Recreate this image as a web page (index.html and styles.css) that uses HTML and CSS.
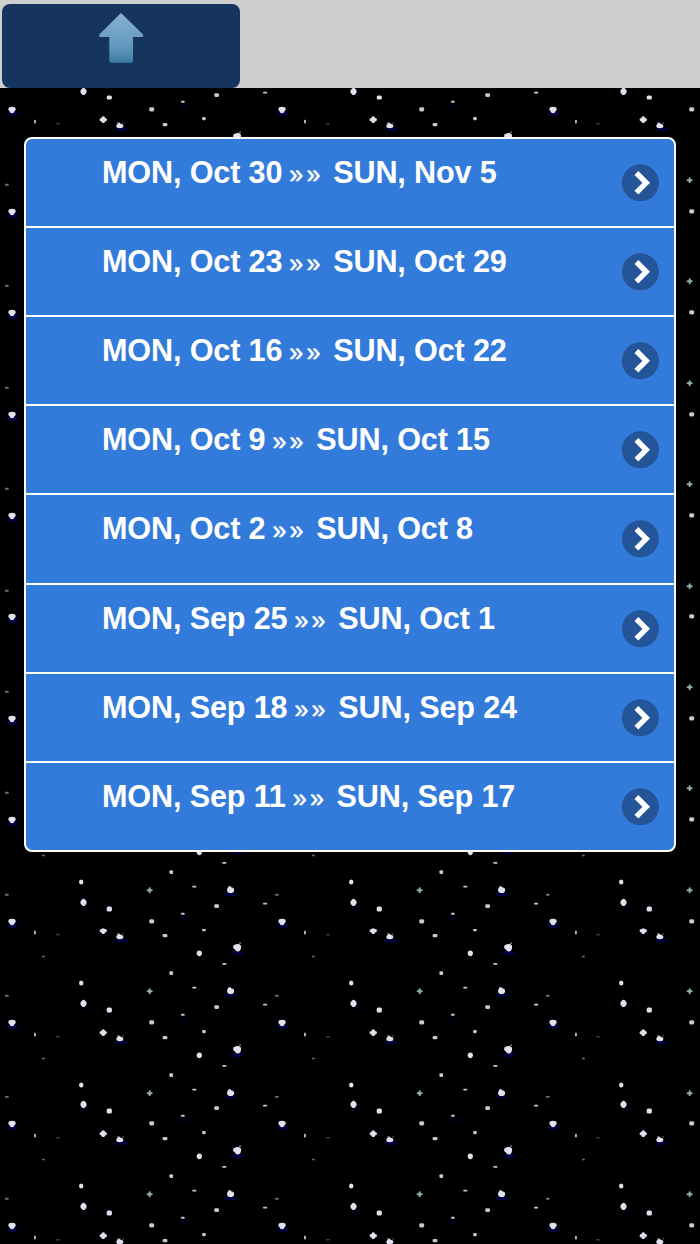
FILE: index.html
```
<!DOCTYPE html>
<html lang="en">
  <head>
    <meta charset="UTF-8" />
    <title>Weeks</title>
    <link rel="stylesheet" href="styles.css">
  </head>
  <body>
    <div class="header">
      <a class="up" href="#" aria-label="Up">
        <svg width="46" height="52" viewBox="0 0 46 52">
          <defs>
            <linearGradient id="arrow" x1="0" y1="0" x2="0" y2="1">
              <stop offset="0" stop-color="#86b0d1" />
              <stop offset="0.65" stop-color="#6499bf" />
              <stop offset="1" stop-color="#3f7ba6" />
            </linearGradient>
          </defs>
          <path d="M23.5 1.5 L45 22.5 Q45.8 25 44 25 H35 V49 Q35 50.8 33.5 50.8 H13 Q11.3 50.8 11.3 49 V25 H2.5 Q0.5 25 1.3 22.5 L22.5 1.5 Q23 1 23.5 1.5 Z" fill="url(#arrow)" />
        </svg>
      </a>
    </div>

    <ul class="weeks" id="weeks"></ul>

    <script>
      let weeks = [
        ["MON, Oct 30", "SUN, Nov 5"],
        ["MON, Oct 23", "SUN, Oct 29"],
        ["MON, Oct 16", "SUN, Oct 22"],
        ["MON, Oct 9", "SUN, Oct 15"],
        ["MON, Oct 2", "SUN, Oct 8"],
        ["MON, Sep 25", "SUN, Oct 1"],
        ["MON, Sep 18", "SUN, Sep 24"],
        ["MON, Sep 11", "SUN, Sep 17"]
      ];
      let list = document.getElementById("weeks");
      for (let week of weeks) {
        let li = document.createElement("li");
        li.innerHTML = `
          <a href="#">
            <span class="range">${week[0]}<span class="sep">»»</span>${week[1]}</span>
            <svg class="next" width="38" height="38" viewBox="0 0 38 38">
              <circle cx="19.4" cy="18.8" r="18.5" fill="#235598" />
              <path d="M15.4 9 L25.2 18.8 L15.4 28.6" fill="none" stroke="#fff" stroke-width="5.4" />
            </svg>
          </a>
        `;
        list.appendChild(li);
      }
    </script>
  </body>
</html>
```
FILE: styles.css
```
html {
  height: 100%;
}
body {
  margin: 0;
  min-height: 100%;
  background-color: #000;
  background-image: url("data:image/svg+xml,%3Csvg xmlns='http://www.w3.org/2000/svg' width='270.3' height='101.4' viewBox='0 0 270.3 101.4'%3E%3Cg fill='%23000050' opacity='.75'%3E%3Cellipse cx='12.500' cy='66' rx='5.500' ry='2.500'/%3E%3Cellipse cx='121' cy='82' rx='7' ry='1.800'/%3E%3Cellipse cx='231' cy='35' rx='7' ry='1.800'/%3E%3Cellipse cx='238' cy='94.500' rx='6' ry='2.500'/%3E%3Cellipse cx='183' cy='59' rx='4' ry='3' opacity='.3'/%3E%3Cellipse cx='86' cy='48' rx='4' ry='2' opacity='.3'/%3E%3C/g%3E%3Cg fill='%23e0e0ee'%3E%3Cellipse cx='12' cy='61.800' rx='3.600' ry='2.400'/%3E%3Cellipse cx='12' cy='62.800' rx='2.500' ry='3'/%3E%3Cellipse cx='83.300' cy='43.200' rx='3.100' ry='2.600'/%3E%3Cellipse cx='83.300' cy='43.200' rx='2.200' ry='3.600'/%3E%3Crect x='106.400' y='47.200' width='5.200' height='5' rx='1.500'/%3E%3Cellipse cx='103' cy='72.200' rx='3.700' ry='1.900'/%3E%3Cellipse cx='103' cy='72.200' rx='2' ry='3.400'/%3E%3Cellipse cx='119.500' cy='78.600' rx='3.500' ry='2.200'/%3E%3Cellipse cx='118.700' cy='77.700' rx='1.900' ry='2.600'/%3E%3Cellipse cx='231' cy='31' rx='3.500' ry='2.800'/%3E%3Cellipse cx='230' cy='29.500' rx='1.900' ry='2.600'/%3E%3Cellipse cx='237.500' cy='88.400' rx='4' ry='2.600'/%3E%3Cellipse cx='238.200' cy='89.200' rx='3' ry='3.700'/%3E%3Cellipse cx='199.800' cy='94.800' rx='2.600' ry='2.800'/%3E%3Cellipse cx='81' cy='22.800' rx='2.200' ry='2.500'/%3E%3C/g%3E%3Cg fill='%23c8c8d0'%3E%3Crect x='148.800' y='60' width='5' height='4' rx='1.500'/%3E%3Crect x='162.200' y='75.500' width='4.800' height='3.400' rx='1.300'/%3E%3Crect x='214.700' y='45' width='4.800' height='3.600' rx='1.300'/%3E%3Crect x='169' y='11.200' width='3.600' height='3.800' rx='1'/%3E%3Crect x='202.600' y='69.500' width='3.600' height='3.200' rx='1'/%3E%3Crect x='192.800' y='26.500' width='4' height='1.800' rx='.6'/%3E%3Crect x='263.400' y='43.500' width='4' height='1.800' rx='.6'/%3E%3Crect x='222.800' y='3' width='4' height='1.800' rx='.6'/%3E%3Crect x='180.600' y='53.500' width='3.600' height='1.800' rx='.6'/%3E%3Crect x='34' y='72.300' width='1.700' height='3.700' rx='.6'/%3E%3C/g%3E%3Cpath d='M147.300 31h4M149.300 29v4' stroke='%2390b0a8' stroke-width='2' stroke-linecap='round'/%3E%3Cg fill='%23707070'%3E%3Crect x='5' y='34.600' width='3.600' height='2' rx='.6'/%3E%3Crect x='42' y='97.200' width='2.600' height='1.500'/%3E%3Crect x='117' y='74.500' width='1.500' height='1.500'/%3E%3Crect x='122' y='75' width='1.500' height='1'/%3E%3Crect x='239.500' y='84' width='2' height='1.500'/%3E%3Crect x='56' y='76' width='3.500' height='.8'/%3E%3C/g%3E%3C/svg%3E");
  background-size: 270.3px 101.4px;
  background-position: 0 47.8px;
  font-family: "Liberation Sans", Arial, sans-serif;
}
.header {
  height: 88px;
  background-color: #cfcfcf;
  display: flex;
  align-items: flex-end;
}
.up {
  box-sizing: border-box;
  width: 238.5px;
  height: 84.5px;
  margin-left: 1.5px;
  padding-top: 8px;
  border-radius: 8px;
  background-color: #16355e;
  text-align: center;
}
.weeks {
  list-style: none;
  margin: 49px 24px 0;
  padding: 0;
  border: 2px solid #fff;
  border-radius: 8px;
  overflow: hidden;
  background-color: #337bda;
}
.weeks li {
  box-sizing: border-box;
  height: 89.12px;
  border-bottom: 2px solid #fff;
}
.weeks li:last-child {
  height: 87.12px;
  border-bottom: none;
}
.weeks a {
  display: flex;
  justify-content: space-between;
  padding: 15px 15px 0 76px;
  color: #fff;
  text-decoration: none;
}
.range {
  font-size: 30.6px;
  line-height: 36px;
  letter-spacing: -0.15px;
  font-weight: bold;
  white-space: pre;
}
.sep {
  margin: 0 9.5px 0 7px;
  font-size: 25px;
  font-weight: normal;
  letter-spacing: 3.3px;
  -webkit-text-stroke: 0.5px #fff;
}
.next {
  margin-top: 10px;
}
```
